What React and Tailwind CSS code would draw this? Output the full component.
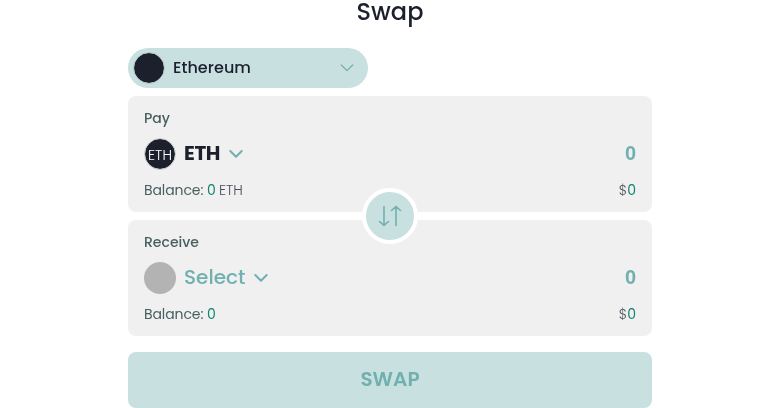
const TEAL = '#71b0b0';

function Chevron({ className, width = 2 }) {
  return (
    <svg viewBox="0 0 14 8" className={className} fill="none" stroke={TEAL} strokeWidth={width} strokeLinecap="round" strokeLinejoin="round">
      <path d="M1.3 1l5.700 5.700 5.700-5.700" />
    </svg>
  );
}

function Panel({ label, token, unit }) {
  return (
    <section className="h-[116px] rounded-lg bg-[#f0f0f0] px-4 text-sm text-[#485f5f]">
      <div className="flex h-[42px] items-center pt-[2px] font-medium leading-5">{label}</div>
      <div className="flex h-8 items-center justify-between">
        <div className="flex items-center">{token}</div>
        <span className="pb-[2px] font-['Liberation_Sans',Arial,sans-serif] text-[20px] font-bold leading-[30px] text-[#71b0b0]">0</span>
      </div>
      <div className="flex h-10 items-center justify-between leading-5">
        <div className="flex">
          <span className="w-[63px] tracking-[-0.1px]">Balance:</span>
          <span className="w-3 text-[#138270]">0</span>
          {unit && <span className="font-light text-[#4d4d59]">{unit}</span>}
        </div>
        <div className="flex">
          <span className="font-light text-[#4d4d59]">$</span>
          <span className="text-[#138270]">0</span>
        </div>
      </div>
    </section>
  );
}

export default function App() {
  return (
    <main className="flex h-[408px] w-[780px] flex-col items-center font-[Poppins,Inter,'Liberation_Sans',sans-serif] text-[#1c202d] will-change-transform">
      <h1 className="flex h-12 items-start text-2xl font-medium leading-6">Swap</h1>
      <div className="flex w-[524px] flex-col">
        <button className="mb-2 flex h-10 w-60 items-center rounded-full bg-[#c8e0e0] pl-[5px] pr-[14px]">
          <span className="size-8 rounded-full border border-[#b9c6c6] bg-[#1c202d] bg-clip-padding" />
          <span className="ml-2 flex-1 text-left text-base font-medium tracking-[0.05px]">Ethereum</span>
          <Chevron className="h-2 w-[14px]" width={1.2} />
        </button>
        <Panel
          label="Pay"
          unit="ETH"
          token={
            <>
              <span className="flex size-8 items-center justify-center rounded-full border border-[#c8c8c8] bg-[#1c202d] bg-clip-padding pt-[2px] text-[14px] font-light text-white">ETH</span>
              <span className="ml-2 w-[45px] pb-[2px] text-[20px] font-bold tracking-[-0.4px] text-[#1c202d]">ETH</span>
              <Chevron className="h-2 w-[14px]" />
            </>
          }
        />
        <div className="relative h-2">
          <button className="absolute left-[234px] top-[-24px] flex size-14 items-center justify-center rounded-full border-4 border-white bg-[#c8e0e0]">
            <svg viewBox="0 0 24 22" className="h-[22px] w-6" fill="none" stroke={TEAL} strokeWidth="1.6" strokeLinecap="round" strokeLinejoin="round">
              <path d="M6 1.500v19M1.500 16.500l4.500 4 4.500-4M18 20.500v-19M13.500 5.500l4.500-4 4.500 4" />
            </svg>
          </button>
        </div>
        <Panel
          label="Receive"
          token={
            <>
              <span className="size-8 rounded-full bg-[#b3b3b3]" />
              <span className="ml-2 w-[70px] pb-[2px] text-[20px] font-medium text-[#71b0b0]">Select</span>
              <Chevron className="h-2 w-[14px]" />
            </>
          }
        />
        <button className="mt-4 flex h-14 items-center justify-center rounded-lg bg-[#c8e0e0] pb-[2px] text-[20px] font-semibold text-[#71b0b0]">SWAP</button>
      </div>
    </main>
  );
}
